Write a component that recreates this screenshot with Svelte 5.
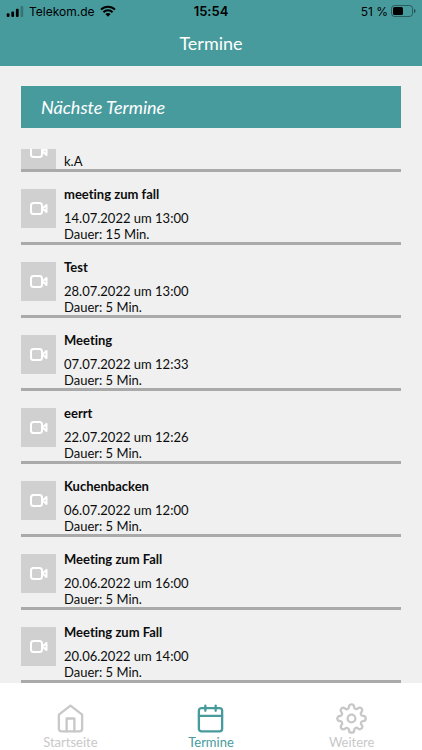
<script lang="ts">
  type Appointment = { title: string; lines: string[] };
  type Tab = { id: string; label: string };

  const appointments: Appointment[] = [
    { title: "", lines: ["k.A"] },
    {
      title: "meeting zum fall",
      lines: ["14.07.2022 um 13:00", "Dauer: 15 Min."],
    },
    { title: "Test", lines: ["28.07.2022 um 13:00", "Dauer: 5 Min."] },
    { title: "Meeting", lines: ["07.07.2022 um 12:33", "Dauer: 5 Min."] },
    { title: "eerrt", lines: ["22.07.2022 um 12:26", "Dauer: 5 Min."] },
    { title: "Kuchenbacken", lines: ["06.07.2022 um 12:00", "Dauer: 5 Min."] },
    {
      title: "Meeting zum Fall",
      lines: ["20.06.2022 um 16:00", "Dauer: 5 Min."],
    },
    {
      title: "Meeting zum Fall",
      lines: ["20.06.2022 um 14:00", "Dauer: 5 Min."],
    },
  ];

  const tabs: Tab[] = [
    { id: "home", label: "Startseite" },
    { id: "calendar", label: "Termine" },
    { id: "settings", label: "Weitere" },
  ];

  let active = $state("calendar");
</script>

<div class="app">
  <header>
    <div class="status">
      <div class="carrier">
        <svg class="signal" viewBox="0 0 18 12" aria-hidden="true">
          <rect x="0" y="8" width="3" height="4" rx="1" />
          <rect x="5" y="6" width="3" height="6" rx="1" />
          <rect x="10" y="3" width="3" height="9" rx="1" />
          <rect x="15" y="0" width="3" height="12" rx="1" opacity="0.25" />
        </svg>
        <span>Telekom.de</span>
        <svg class="wifi" viewBox="0 0 16 12" aria-hidden="true">
          <path d="M1 4.6a10 10 0 0 1 14 0M3.4 7.2a6.6 6.6 0 0 1 9.2 0" />
          <path class="dot" d="M5.4 9.1a3.8 3.8 0 0 1 5.2 0L8 11.8z" />
        </svg>
      </div>
      <span class="time">15:54</span>
      <div class="battery">
        <span>51 %</span>
        <svg viewBox="0 0 25 12" aria-hidden="true">
          <rect class="case" x="0.5" y="0.5" width="21" height="11" rx="3" />
          <rect x="2" y="2" width="10" height="8" rx="1.5" />
          <path d="M23 4v4c1-.3 1.5-1 1.5-2S24 4.3 23 4z" opacity="0.5" />
        </svg>
      </div>
    </div>
    <h1>Termine</h1>
  </header>

  <main>
    <h2>Nächste Termine</h2>
    <ul>
      {#each appointments as appointment}
        <li>
          <div class="tile">
            <svg viewBox="0 0 18 13" aria-hidden="true">
              <rect x="1" y="1" width="11" height="11" rx="2.5" />
              <path d="M12.5 6.5l4-3.500v7z" />
            </svg>
          </div>
          <div class="details">
            <h3>{appointment.title}</h3>
            {#each appointment.lines as line}
              <p>{line}</p>
            {/each}
          </div>
        </li>
      {/each}
    </ul>
  </main>

  <nav>
    {#each tabs as tab (tab.id)}
      <button
        type="button"
        class:active={active === tab.id}
        aria-current={active === tab.id ? "page" : undefined}
        onclick={() => (active = tab.id)}
      >
        <svg viewBox="0 0 24 24" aria-hidden="true">
          {#if tab.id === "home"}
            <path d="M3 9l9-7 9 7v11a2 2 0 0 1-2 2H5a2 2 0 0 1-2-2z" />
            <path d="M9 22V12h6v10" />
          {:else if tab.id === "calendar"}
            <rect x="3" y="4" width="18" height="18" rx="2" />
            <path d="M16 2v4M8 2v4M3 10h18" />
          {:else}
            <circle cx="12" cy="12" r="3" />
            <path
              d="M19.4 15a1.65 1.65 0 0 0 .33 1.82l.06.06a2 2 0 0 1 0 2.83 2 2 0 0 1-2.83 0l-.06-.06a1.65 1.65 0 0 0-1.82-.33 1.65 1.65 0 0 0-1 1.51V21a2 2 0 0 1-2 2 2 2 0 0 1-2-2v-.09A1.65 1.65 0 0 0 9 19.4a1.65 1.65 0 0 0-1.82.33l-.06.06a2 2 0 0 1-2.83 0 2 2 0 0 1 0-2.83l.06-.06a1.65 1.65 0 0 0 .33-1.82 1.65 1.65 0 0 0-1.51-1H3a2 2 0 0 1-2-2 2 2 0 0 1 2-2h.09A1.65 1.65 0 0 0 4.6 9a1.65 1.65 0 0 0-.33-1.82l-.06-.06a2 2 0 0 1 0-2.83 2 2 0 0 1 2.83 0l.06.06a1.65 1.65 0 0 0 1.82.33H9a1.65 1.65 0 0 0 1-1.51V3a2 2 0 0 1 2-2 2 2 0 0 1 2 2v.09a1.65 1.65 0 0 0 1 1.51 1.65 1.65 0 0 0 1.82-.33l.06-.06a2 2 0 0 1 2.83 0 2 2 0 0 1 0 2.83l-.06.06a1.65 1.65 0 0 0-.33 1.82V9a1.65 1.65 0 0 0 1.51 1H21a2 2 0 0 1 2 2 2 2 0 0 1-2 2h-.09a1.65 1.65 0 0 0-1.51 1z"
            />
          {/if}
        </svg>
        {tab.label}
      </button>
    {/each}
  </nav>
</div>

<style>
  .app {
    --teal: #489b9d;
    display: flex;
    flex-direction: column;
    height: 100vh;
    background: #f0f0f0;
    color: #0c0c0c;
    font-family: Lato, "Liberation Sans", sans-serif;
    font-variant-ligatures: none;
  }

  h1,
  h2,
  h3,
  p,
  ul {
    margin: 0;
    padding: 0;
  }

  header {
    background: var(--teal);
  }

  .status {
    display: grid;
    grid-template-columns: 1fr auto 1fr;
    align-items: center;
    height: 22px;
    padding: 0 6px;
    color: #000;
    font-family: Inter, "Liberation Sans", sans-serif;
    font-size: 12px;
  }

  .carrier,
  .battery {
    display: flex;
    align-items: center;
    gap: 5px;
  }

  .battery {
    justify-content: flex-end;
    gap: 3px;
  }

  .signal {
    width: 18px;
    height: 11px;
  }

  .wifi {
    width: 16px;
    height: 12px;
    fill: none;
    stroke: #000;
    stroke-width: 2;
  }

  .wifi .dot {
    fill: #000;
    stroke: none;
  }

  .time {
    font-size: 13px;
    font-weight: 600;
  }

  .battery svg {
    width: 25px;
    height: 12px;
  }

  .battery .case {
    fill: none;
    stroke: #000;
    stroke-opacity: 0.4;
  }

  h1 {
    color: #fff;
    font-size: 18px;
    font-weight: 400;
    line-height: 42px;
    padding-bottom: 2px;
    text-align: center;
  }

  main {
    display: flex;
    flex: 1;
    flex-direction: column;
    gap: 21px;
    min-height: 0;
    padding: 20px 21px 0;
  }

  h2 {
    background: var(--teal);
    color: #fff;
    font-size: 18px;
    font-style: italic;
    font-weight: 400;
    line-height: 42px;
    padding: 0 20px;
  }

  /* the list stays scrolled to its last entry */
  ul {
    display: flex;
    flex: 1;
    flex-direction: column;
    justify-content: flex-end;
    min-height: 0;
    overflow: hidden;
    list-style: none;
  }

  li {
    display: flex;
    flex-shrink: 0;
    gap: 8px;
    overflow: hidden;
    padding-top: 14px;
    border-bottom: 3px solid #aaa;
  }

  .tile {
    display: flex;
    align-items: center;
    justify-content: center;
    flex-shrink: 0;
    width: 35px;
    height: 39px;
    margin: 3px 0 -2px;
    background: #d0d0d0;
  }

  .tile svg {
    width: 18px;
    height: 13px;
    fill: none;
    stroke: #fff;
    stroke-width: 2;
    stroke-linejoin: round;
  }

  .details {
    font-size: 13px;
    line-height: 16px;
  }

  h3 {
    min-height: 16px;
    margin-bottom: 8px;
    font-size: 13px;
    font-weight: 700;
  }

  nav {
    display: grid;
    grid-template-columns: repeat(3, 1fr);
    background: #fff;
  }

  button {
    display: flex;
    flex-direction: column;
    align-items: center;
    padding: 20px 0 0;
    border: 0;
    background: none;
    color: #c8c8c8;
    font: inherit;
    font-size: 13px;
    line-height: 16px;
    cursor: pointer;
  }

  button.active {
    color: var(--teal);
  }

  button svg {
    width: 31px;
    height: 31px;
    fill: none;
    stroke: currentColor;
    stroke-width: 1.8;
    stroke-linecap: round;
    stroke-linejoin: round;
  }
</style>
